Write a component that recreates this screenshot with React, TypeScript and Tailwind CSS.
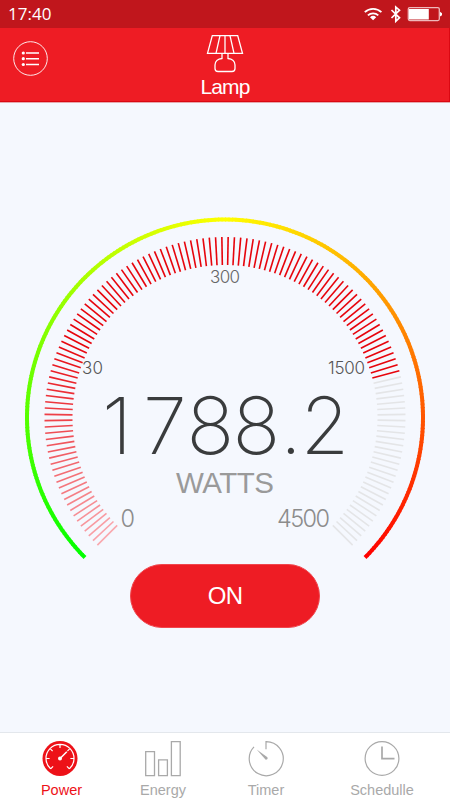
import React from "react";

const CENTER = { x: 225, y: 417.5 };
const TICKS = 136;
const ACTIVE_TICKS = 106;

const polar = (deg: number, r: number) => {
  const rad = (deg * Math.PI) / 180;
  return {
    x: CENTER.x + r * Math.sin(rad),
    y: CENTER.y - r * Math.cos(rad),
  };
};

const arcColor = (deg: number) => {
  const t = deg / 135;
  if (t < 0) return `rgb(${Math.round(255 * (1 + t))},255,0)`;
  return `rgb(255,${Math.round(255 * (1 - t))},0)`;
};

const tickColor = (i: number) => {
  if (i >= ACTIVE_TICKS) return "#e4e5e7";
  const t = Math.min(1, i / 36);
  const g = Math.round(168 - 164 * t);
  const b = Math.round(174 - 162 * t);
  return `rgb(${Math.round(249 - 18 * t)},${g},${b})`;
};

function Label(props: {
  x: number;
  y: number;
  size: number;
  length: number;
  color: string;
  text: string;
}) {
  return (
    <text
      x={props.x}
      y={props.y}
      fontSize={props.size}
      fill={props.color}
      textLength={props.length}
      className="font-['Inter',sans-serif] font-light"
    >
      {props.text}
    </text>
  );
}

function Gauge() {
  return (
    <svg
      width="420"
      height="362"
      viewBox="15 200 420 362"
      className="mx-auto block"
    >
      {Array.from({ length: 270 }, (_, i) => {
        const start = -135 + i;
        const a = polar(start, 198);
        const b = polar(Math.min(135, start + 1.3), 198);
        return (
          <line
            key={i}
            x1={a.x}
            y1={a.y}
            x2={b.x}
            y2={b.y}
            stroke={arcColor(start + 0.5)}
            strokeWidth="4"
          />
        );
      })}
      {Array.from({ length: TICKS }, (_, i) => {
        const a = polar(-135 + i * 2, 152.5);
        const b = polar(-135 + i * 2, 180.5);
        return (
          <line
            key={i}
            x1={a.x}
            y1={a.y}
            x2={b.x}
            y2={b.y}
            stroke={tickColor(i)}
            strokeWidth="1.6"
          />
        );
      })}
      <Label x={210} y={282.5} size={17} length={30} color="#666" text="300" />
      <Label x={82} y={373.5} size={17} length={21} color="#555" text="30" />
      <Label x={328} y={373.5} size={17} length={37} color="#555" text="1500" />
      <text
        x="102 143 186.5 232.5 280 300.5"
        y="454"
        fontSize="79"
        fill="#3a3c3d"
        className="font-['Inter',sans-serif] font-extralight"
      >
        1788.2
      </text>
      <text
        x="176"
        y="493"
        fontSize="29.5"
        fill="#9a9a9a"
        textLength="98"
        className="font-['Liberation_Sans',sans-serif]"
      >
        WATTS
      </text>
      <Label x={120.5} y={527} size={23.5} length={14} color="#8c8c8c" text="0" />
      <Label x={277} y={527} size={23.5} length={53} color="#8c8c8c" text="4500" />
    </svg>
  );
}

function StatusBar() {
  return (
    <div className="flex h-7 items-center justify-between bg-[#c0161c] pl-2 pr-2 text-white">
      <span className="font-['Open_Sans',sans-serif] text-[17px] leading-7">
        17:40
      </span>
      <svg width="80" height="28" viewBox="362 0 80 28" fill="none">
        <g stroke="#fff" strokeWidth="1.8">
          <path d="M364.8 12.2a12 12 0 0 1 16.6 0" />
          <path d="M367.9 15.4a7.6 7.6 0 0 1 10.4 0" />
        </g>
        <path d="M370 17.2a4.5 4.5 0 0 1 6.2 0l-3.1 3.1z" fill="#fff" />
        <path
          d="M391.5 10l8 7.8-3.7 3.4V7l3.7 3.2-8 7.8"
          stroke="#fff"
          strokeWidth="1.7"
        />
        <rect x="408.3" y="7.6" width="31" height="13" rx="1.5" stroke="#efb9bb" strokeWidth="1.3" />
        <path d="M409 9h19.8v10.5h-19.8z" fill="#fff" />
        <path d="M440 11.8l2 1.4v2l-2 1.4z" fill="#fff" />
      </svg>
    </div>
  );
}

function Header() {
  return (
    <header className="grid h-[75px] grid-cols-[1fr_60px_1fr] border-b border-[#e6a9ae] bg-[#ee1c24] shadow-[inset_0_-1px_0_#da0812,inset_-1px_0_0_#da0812]">
      <button aria-label="Menu" className="ml-[13px] mt-[13px] h-[35px] w-[35px]">
        <svg width="35" height="35" viewBox="0 0 35 35" fill="none" stroke="#fff">
          <circle cx="17.5" cy="17.5" r="16.8" strokeWidth="0.9" />
          <path d="M13 12h13M13 17.7h13M13 23.5h13" strokeWidth="1.5" />
          <g fill="#fff" stroke="none">
            <circle cx="10.3" cy="12" r="1.6" />
            <circle cx="10.3" cy="17.7" r="1.6" />
            <circle cx="10.3" cy="23.5" r="1.6" />
          </g>
        </svg>
      </button>
      <div className="flex flex-col items-center">
        <svg
          width="60"
          height="46"
          viewBox="195 28 60 46"
          fill="none"
          stroke="#fff"
          strokeWidth="1.3"
        >
          <path d="M212.3 35.6h25.4l4.8 17.8h-35z" />
          <path d="M220 35.6l-4 17.8M225 35.6v17.8M230 35.6l4 17.8" />
          <path d="M222 53.4v5.1c-4.2.3-7 3-7 6.5v3.5q0 3 3 3h14q3 0 3-3v-3.5c0-3.5-2.8-6.2-7-6.5v-5.1" />
        </svg>
        <span className="font-['Liberation_Sans',sans-serif] text-[21px] leading-[25px] tracking-[-0.9px] text-white">
          Lamp
        </span>
      </div>
    </header>
  );
}

function Tab({
  label,
  active,
  children,
}: {
  label: string;
  active?: boolean;
  children: React.ReactNode;
}) {
  return (
    <button
      className={
        active
          ? "flex flex-col items-center pt-2 text-[#ed1118]"
          : "flex flex-col items-center pt-2 text-[#a9a9a9]"
      }
    >
      <svg
        width="36"
        height="36"
        viewBox="0 0 36 36"
        fill="none"
        stroke="currentColor"
        className={active ? "-ml-[3px]" : ""}
      >
        {children}
      </svg>
      <span className="font-['Liberation_Sans',sans-serif] text-[14.5px] leading-[26px]">
        {label}
      </span>
    </button>
  );
}

function TabBar() {
  return (
    <nav className="mt-auto grid h-[68px] grid-cols-[103px_100px_106px_126px] border-t border-[#e3e7ec] bg-white pl-2.5">
      <Tab label="Power" active>
        <circle cx="18" cy="17.5" r="17.5" fill="currentColor" stroke="none" />
        <path
          d="M8.6 27.8a14 14 0 1 1 18.8 0M8.6 27.8l2.5-2.5M27.4 27.8l-2.5-2.5M4.1 17.5h3.5M31.9 17.5h-3.5M18 3.5v3.5M8.2 7.7l2.4 2.4M27.8 7.7l-2.4 2.4"
          stroke="#fff"
          strokeWidth="1.2"
        />
        <path d="M18 17.5l6.8-6.8" stroke="#fff" strokeWidth="1.5" />
        <circle cx="18" cy="17.5" r="2" fill="#fff" stroke="none" />
      </Tab>
      <Tab label="Energy">
        <path d="M.7 10.7h8.8v24H.7zM13.6 18.8h8.8v15.9h-8.8zM26.4.7h8.8v34h-8.8z" strokeWidth="1.3" />
      </Tab>
      <Tab label="Timer">
        <path d="M18 8.2V.7a17 17 0 1 1-12 5.2" strokeWidth="1.2" />
        <path d="M8.7 8.6l10.7 7.7q.9 2.3-1.7 2.5z" fill="currentColor" stroke="none" />
      </Tab>
      <Tab label="Schedulle">
        <circle cx="18" cy="17.5" r="16.9" strokeWidth="1.2" />
        <path d="M18 5.5v12.2h12.5" strokeWidth="1.7" />
      </Tab>
    </nav>
  );
}

export default function App() {
  return (
    <div className="flex h-[800px] w-[450px] flex-col overflow-hidden bg-[#f5f8fe]">
      <StatusBar />
      <Header />
      <main className="flex flex-col items-center pt-[97px]">
        <Gauge />
        <button className="mt-0.5 h-[64px] w-[190px] rounded-full border border-[#f0464d] bg-[#ee1c24] font-['Liberation_Sans',sans-serif] text-[24px] tracking-[-0.8px] text-white">
          ON
        </button>
      </main>
      <TabBar />
    </div>
  );
}
